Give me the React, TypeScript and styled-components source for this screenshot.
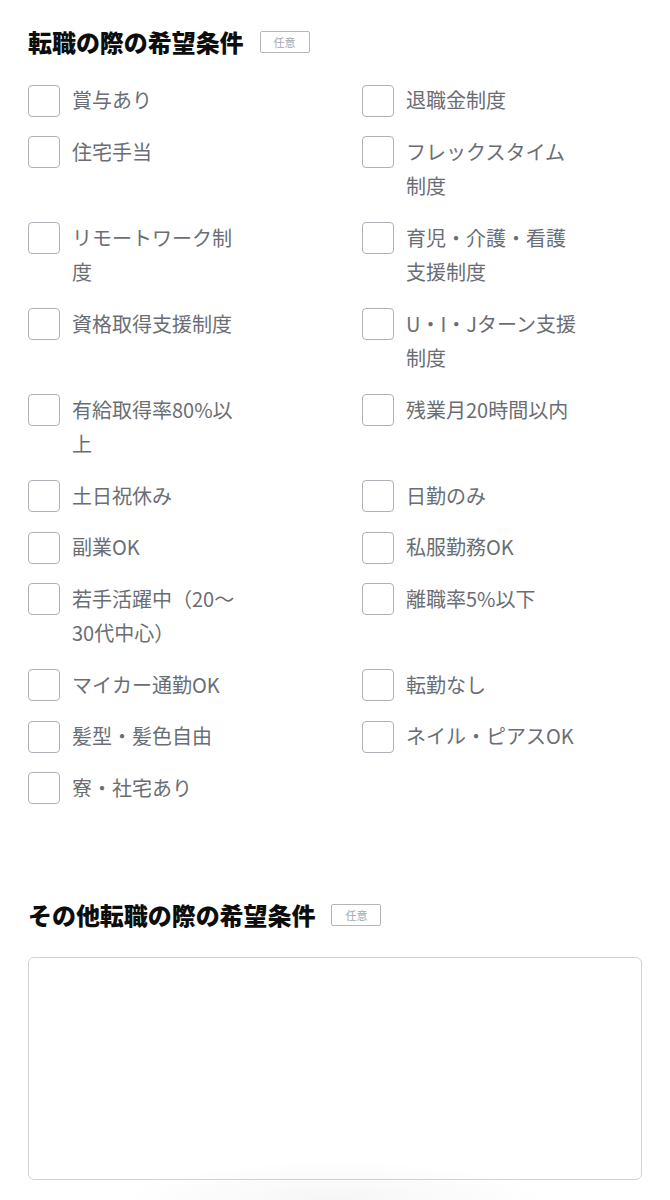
import React from "react";
import styled, { createGlobalStyle } from "styled-components";

const GlobalStyle = createGlobalStyle`
  html, body {
    margin: 0;
    padding: 0;
    background: #ffffff;
  }
  body {
    font-family: "Noto Sans CJK JP", "Noto Sans", sans-serif;
    -webkit-font-smoothing: antialiased;
  }
  * { box-sizing: border-box; }
`;

const Page = styled.div`
  width: 670px;
  min-height: 1200px;
  padding: 24px 28px 20px;
  position: relative;
  overflow: hidden;
`;

const Section = styled.section<{ $mt?: number }>`
  margin-top: ${(p) => p.$mt ?? 0}px;
`;

const TitleRow = styled.div<{ $mb: number }>`
  display: flex;
  align-items: center;
  gap: 16px;
  height: 36px;
  margin-bottom: ${(p) => p.$mb}px;
`;

const Title = styled.h2`
  margin: 0;
  font-size: 24px;
  line-height: 36px;
  font-weight: 900;
  color: #0d0d0d;
  letter-spacing: -0.05px;
`;

const Badge = styled.span`
  display: inline-flex;
  align-items: center;
  justify-content: center;
  width: 50px;
  height: 22px;
  border: 1.5px solid #b4b6ba;
  border-radius: 2px;
  font-size: 11px;
  color: #a5a7ab;
  line-height: 1;
`;

const Grid = styled.div`
  display: grid;
  grid-template-columns: 1fr 1fr;
  column-gap: 54px;
  row-gap: 17px;
`;

const Item = styled.label`
  display: flex;
  align-items: flex-start;
  gap: 12px;
  cursor: pointer;
`;

const Box = styled.span`
  flex: 0 0 auto;
  width: 32px;
  height: 32px;
  margin-top: 1.5px;
  border: 1.5px solid #aeb1b6;
  border-radius: 4px;
  background: #ffffff;
`;

const Label = styled.span`
  max-width: 177px;
  font-size: 20px;
  line-height: 34.5px;
  color: #6a6e74;
  word-break: normal;
  line-break: strict;
`;

const TextArea = styled.textarea`
  display: block;
  width: 100%;
  height: 223px;
  border: 1.5px solid #d2d3d7;
  border-radius: 6px;
  resize: none;
  outline: none;
  font-family: inherit;
  font-size: 18px;
  padding: 12px;
  background: #ffffff;
`;

const Shadow = styled.div`
  position: absolute;
  left: 120px;
  right: 120px;
  bottom: -40px;
  height: 80px;
  background: radial-gradient(ellipse at center, rgba(120, 125, 140, 0.07) 0%, rgba(120, 125, 140, 0) 70%);
  pointer-events: none;
`;

const items: string[] = [
  "賞与あり",
  "退職金制度",
  "住宅手当",
  "フレックスタイム制度",
  "リモートワーク制度",
  "育児・介護・看護支援制度",
  "資格取得支援制度",
  "U・I・Jターン支援制度",
  "有給取得率80%以上",
  "残業月20時間以内",
  "土日祝休み",
  "日勤のみ",
  "副業OK",
  "私服勤務OK",
  "若手活躍中（20〜30代中心）",
  "離職率5%以下",
  "マイカー通勤OK",
  "転勤なし",
  "髪型・髪色自由",
  "ネイル・ピアスOK",
  "寮・社宅あり",
];

export default function App() {
  return (
    <>
      <GlobalStyle />
      <Page>
        <Section>
          <TitleRow $mb={23}>
            <Title>転職の際の希望条件</Title>
            <Badge>任意</Badge>
          </TitleRow>
          <Grid>
            {items.map((t) => (
              <Item key={t}>
                <Box />
                <Label>{t}</Label>
              </Item>
            ))}
          </Grid>
        </Section>
        <Section $mt={92}>
          <TitleRow $mb={24}>
            <Title>その他転職の際の希望条件</Title>
            <Badge>任意</Badge>
          </TitleRow>
          <TextArea />
        </Section>
        <Shadow />
      </Page>
    </>
  );
}
